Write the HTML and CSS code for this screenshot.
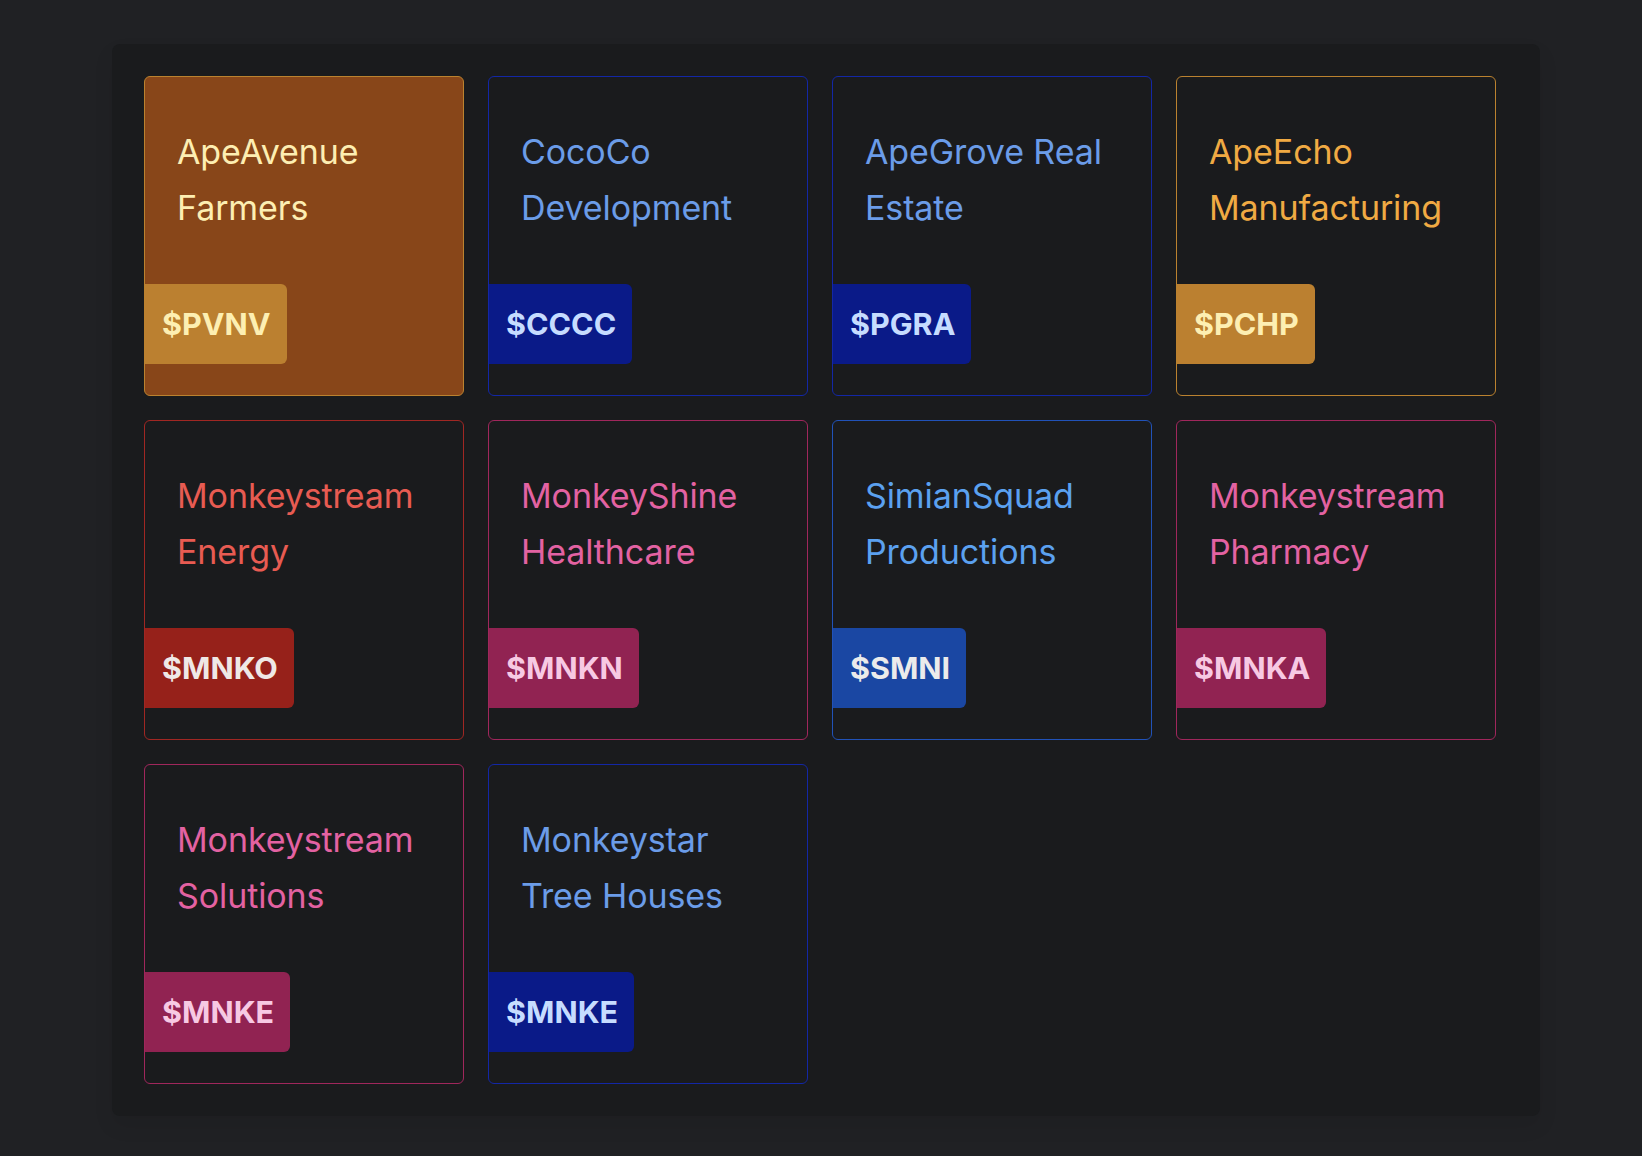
FILE: index.html
```html
<!DOCTYPE html>
<html>
<head>
<meta charset="utf-8">
<link rel="stylesheet" href="styles.css">
</head>
<body>
<div class="panel">
  <div class="grid">
    <div class="card amber-fill">
      <div class="name">ApeAvenue Farmers</div>
      <div class="tag">$PVNV</div>
    </div>
    <div class="card navy">
      <div class="name">CocoCo Development</div>
      <div class="tag">$CCCC</div>
    </div>
    <div class="card navy">
      <div class="name">ApeGrove Real Estate</div>
      <div class="tag">$PGRA</div>
    </div>
    <div class="card amber">
      <div class="name">ApeEcho Manufacturing</div>
      <div class="tag">$PCHP</div>
    </div>
    <div class="card red">
      <div class="name">Monkeystream Energy</div>
      <div class="tag">$MNKO</div>
    </div>
    <div class="card pink">
      <div class="name">MonkeyShine Healthcare</div>
      <div class="tag">$MNKN</div>
    </div>
    <div class="card blue">
      <div class="name">SimianSquad Productions</div>
      <div class="tag">$SMNI</div>
    </div>
    <div class="card pink">
      <div class="name">Monkeystream Pharmacy</div>
      <div class="tag">$MNKA</div>
    </div>
    <div class="card pink">
      <div class="name">Monkeystream Solutions</div>
      <div class="tag">$MNKE</div>
    </div>
    <div class="card navy">
      <div class="name">Monkeystar Tree Houses</div>
      <div class="tag">$MNKE</div>
    </div>
  </div>
</div>
</body>
</html>
```

FILE: styles.css
```css
html, body {
  margin: 0;
  padding: 0;
  background: #202124;
}
body {
  font-family: Inter, "Noto Sans", sans-serif;
  padding: 44px 0 0 112px;
  min-height: 1156px;
  box-sizing: border-box;
}
.panel {
  width: 1428px;
  height: 1072px;
  box-sizing: border-box;
  background: #1a1b1d;
  border-radius: 8px;
  padding: 32px;
  box-shadow: 0 0 24px rgba(255, 255, 255, 0.015), 0 10px 20px rgba(0, 0, 0, 0.08);
}
.grid {
  display: grid;
  grid-template-columns: repeat(4, 320px);
  grid-auto-rows: 320px;
  gap: 24px;
}
.card {
  box-sizing: border-box;
  border: 1px solid;
  border-radius: 6px;
  padding: 47px 0 31px 0;
  display: flex;
  flex-direction: column;
  justify-content: space-between;
  align-items: flex-start;
  background: #1a1b1d;
}
.name {
  padding: 0 32px;
  font-size: 34px;
  line-height: 56px;
  font-weight: 400;
  letter-spacing: -0.1px;
}
.tag {
  font-size: 30.5px;
  font-weight: 700;
  line-height: 48px;
  padding: 16px 16px 16px 17px;
  border-radius: 0 6px 6px 0;
}
.amber-fill { background: #884619; border-color: #bb822f; }
.amber-fill .name { color: #fdeeb2; }
.amber-fill .tag { background: #bb8030; color: #fdefb2; }

.amber { border-color: #bb822f; }
.amber .name { color: #f0aa43; }
.amber .tag { background: #bb8030; color: #fdefb2; }

.navy { border-color: #1327a6; }
.navy .name { color: #6b9ce8; }
.navy .tag { background: #0a1a88; color: #c6dcff; }

.red { border-color: #a02723; }
.red .name { color: #e85b52; }
.red .tag { background: #96211a; color: #efe8e6; }

.pink { border-color: #a0275c; }
.pink .name { color: #e362a2; }
.pink .tag { background: #912352; color: #f7c9e3; }

.blue { border-color: #2152b8; }
.blue .name { color: #5ba1f0; }
.blue .tag { background: #1a47a3; color: #ebebeb; }
```
